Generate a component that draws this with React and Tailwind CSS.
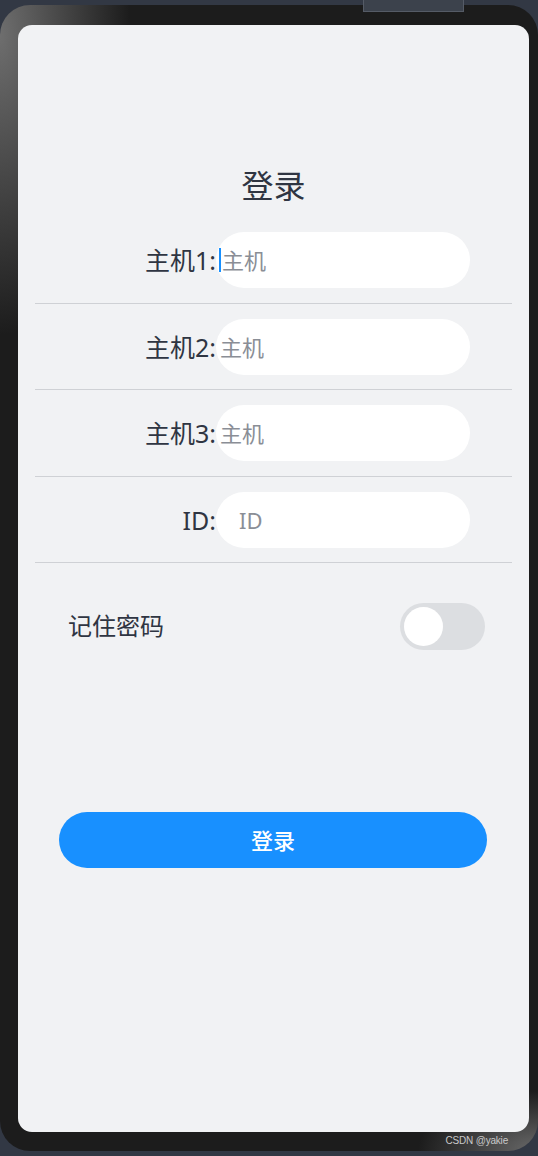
import React, { useState } from 'react';

const hosts = [
  { label: '主机1:', placeholder: '主机', focused: true, pad: 'pl-[3px]' },
  { label: '主机2:', placeholder: '主机', pad: 'pl-[4px]' },
  { label: '主机3:', placeholder: '主机', pad: 'pl-[4px]' },
  { label: 'ID:', placeholder: 'ID', pad: 'pl-[23px]' },
];

const FormRow = ({ label, placeholder, focused, pad }) => (
  <div className="flex items-center pt-[15px] pb-[14.5px] border-b border-[#cfd1d5]">
    <div className="w-[181px] text-right text-[25px] leading-[30px] text-[#2f3542]">{label}</div>
    <div className={`relative flex items-center h-[56px] w-[254px] bg-white rounded-full ${pad}`}>
      {focused && <span className="w-[2px] h-[24px] bg-[#1890ff] mr-[1px]" />}
      <span className="text-[22px] leading-[28px] text-[#8a8e96]">{placeholder}</span>
    </div>
  </div>
);

const App = () => {
  const [remember, setRemember] = useState(false);

  return (
    <div
      className="relative w-[538px] h-[1156px] bg-[#323844] overflow-hidden"
      style={{ fontFamily: '"Noto Sans", "Noto Sans CJK SC", sans-serif' }}
    >
      {/* top tab */}
      <div className="absolute left-[363px] top-0 w-[101px] h-[12px] bg-[#3c424c] border border-[#555b66] border-t-0 z-10" />

      <div className="mt-[5px] h-[1146px] rounded-[30px] pl-[18px] pr-[9px] pt-[20px] pb-[19px] flex bg-[#1c1c1c] bg-[radial-gradient(ellipse_130px_300px_at_0px_30px,#6e6e6e,rgba(28,28,28,0)),radial-gradient(ellipse_120px_60px_at_538px_1146px,#6a6a6a,rgba(28,28,28,0))]">
        <div className="flex-1 bg-[#f1f2f4] rounded-[14px] flex flex-col">
          <h1 className="mt-[141px] h-[40px] text-center text-[32px] leading-[40px] font-normal text-[#2f3542]">登录</h1>

          <div className="mt-[11px] mx-[17px]">
            {hosts.map((h) => (
              <FormRow key={h.label} {...h} />
            ))}
          </div>

          <div className="flex items-center justify-between mt-[40px] pl-[50px] pr-[44px]">
            <span className="text-[24px] leading-[30px] text-[#2f3542] -mt-[1px]">记住密码</span>
            <button
              type="button"
              onClick={() => setRemember(!remember)}
              className={`w-[85px] h-[47px] rounded-full p-[4px] flex ${
                remember ? 'bg-[#1890ff] justify-end' : 'bg-[#dcdee1] justify-start'
              }`}
            >
              <span className="w-[39px] h-[39px] rounded-full bg-white" />
            </button>
          </div>

          <button
            type="button"
            className="mt-[162px] ml-[41px] w-[428px] h-[56px] rounded-full bg-[#1890ff] text-white text-[22px] font-medium"
          >
            登录
          </button>
        </div>
      </div>

      <span
        className="absolute right-[30px] top-[1134px] text-[10px] leading-[13px] tracking-[-0.2px] text-[#c9c9c9]"
        style={{ fontFamily: '"Liberation Sans", sans-serif' }}
      >
        CSDN @yakie
      </span>
    </div>
  );
};

export default App;
